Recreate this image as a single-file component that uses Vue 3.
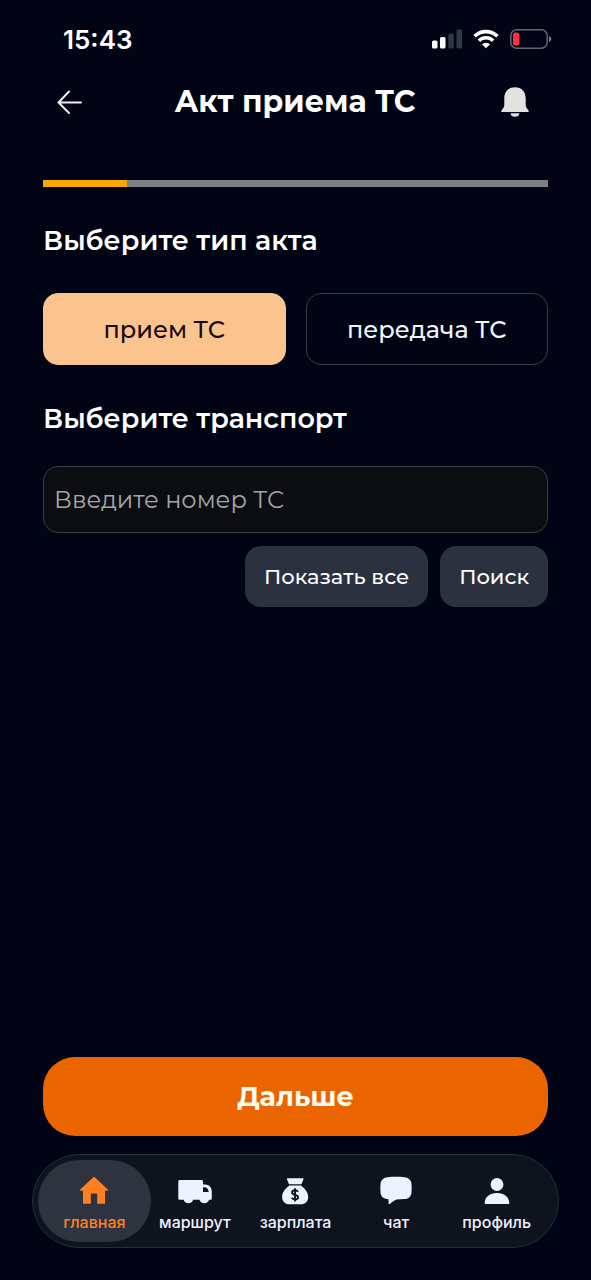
<script setup>
import { ref } from 'vue'

const actTypes = ['прием ТС', 'передача ТС']
const selectedType = ref(actTypes[0])
const vehicleNumber = ref('')
const activeTab = ref('home')
const tabs = [
  { id: 'home', label: 'главная' },
  { id: 'route', label: 'маршрут' },
  { id: 'salary', label: 'зарплата' },
  { id: 'chat', label: 'чат' },
  { id: 'profile', label: 'профиль' },
]
</script>

<template>
  <div class="screen">
    <div class="status">
      <span class="time">15:43</span>
      <div class="indicators">
        <svg width="30" height="20" viewBox="0 0 30 20" aria-hidden="true">
          <rect x="0" y="11.500" width="5.500" height="8" rx="1.600" fill="#fff" />
          <rect x="8" y="8" width="5.500" height="11.500" rx="1.600" fill="#fff" />
          <rect x="16.300" y="4.500" width="5.500" height="15" rx="1.600" fill="#333643" />
          <rect x="24.500" y="0.300" width="5.500" height="19.200" rx="1.600" fill="#333643" />
        </svg>
        <svg width="26" height="20" viewBox="0 0 26 20" aria-hidden="true">
          <g fill="none" stroke="#fff" stroke-width="3.600">
            <path d="M1.600 7.300a16.300 16.300 0 0 1 22.800 0" />
            <path d="M5.900 11.700a10.100 10.100 0 0 1 14.200 0" />
          </g>
          <path d="M13 19.300 8.900 15.300a5.900 5.900 0 0 1 8.200 0z" fill="#fff" />
        </svg>
        <svg width="42" height="20" viewBox="0 0 42 20" aria-hidden="true">
          <rect x="0.800" y="0.800" width="36.400" height="18.400" rx="5.800" fill="none" stroke="#656773" stroke-width="1.500" />
          <rect x="3" y="3.500" width="6.500" height="13" rx="2.500" fill="#ff343b" />
          <path d="M39 7v6c3-1 3-5 0-6z" fill="#777985" />
        </svg>
      </div>
    </div>

    <header class="header">
      <button class="back" type="button" aria-label="Назад">
        <svg width="26" height="24" viewBox="0 0 26 24" fill="none" stroke="#eee" stroke-width="2" stroke-linecap="round" stroke-linejoin="round">
          <path d="M24 12.500H1.500M12 1.500 1.500 12.500 12 23" />
        </svg>
      </button>
      <h1>Акт приема ТС</h1>
      <button class="bell" type="button" aria-label="Уведомления">
        <svg width="28" height="30" viewBox="0 0 28 30" fill="#e2e2e2">
          <path d="M14 .3C7.200.3 3.300 5.100 3.300 11.500v6.200c0 2-1 3.600-2.500 5.200-1.100 1.200-.7 2.100.6 2.100h25.200c1.300 0 1.700-.9.600-2.100-1.500-1.600-2.500-3.200-2.500-5.200v-6.200C24.700 5.100 20.800.3 14 .3z" />
          <path d="M9.700 26.300h8.600a4.300 3.500 0 0 1-8.600 0z" />
        </svg>
      </button>
    </header>

    <main class="content">
      <progress class="progress" value="1" max="6" aria-label="Шаг 1 из 6"></progress>

      <h2>Выберите тип акта</h2>
      <div class="types">
        <button
          v-for="type in actTypes"
          :key="type"
          type="button"
          class="type"
          :class="{ selected: type === selectedType }"
          :aria-pressed="type === selectedType"
          @click="selectedType = type"
        >{{ type }}</button>
      </div>

      <h2><label for="vehicle">Выберите транспорт</label></h2>
      <input id="vehicle" v-model="vehicleNumber" class="field" type="text" placeholder="Введите номер ТС" />
      <div class="actions">
        <button type="button">Показать все</button>
        <button type="button">Поиск</button>
      </div>

      <button class="next" type="button">Дальше</button>
    </main>

    <nav class="tabs">
      <a
        v-for="tab in tabs"
        :key="tab.id"
        :href="'#' + tab.id"
        class="tab"
        :class="{ active: tab.id === activeTab }"
        @click="activeTab = tab.id"
      >
        <svg v-if="tab.id === 'home'" width="36" height="30" viewBox="0 0 36 30" fill="currentColor">
          <path d="M17.300 1.200q.7-.5 1.400 0L31.800 13.400q.7 1.100-.6 1.300h-2.200v12.500q0 .6-.6.600h-7.200V17.500h-6.400v10.300H7.600q-.6 0-.6-.6V14.700H4.800q-1.300-.2-.6-1.300z" />
        </svg>
        <svg v-else-if="tab.id === 'route'" width="36" height="30" viewBox="0 0 36 30" fill="currentColor">
          <path fill-rule="evenodd" d="M2.800 4h21.700c.9 0 1.500.6 1.500 1.500V8.500h2.200c3.900 0 6.600 3 6.600 7.300v6.700c0 .9-.4 1.300-1.300 1.300h-1.400a5 4.700 0 0 1-9.600 0h-6.300a5 4.700 0 0 1-9.600 0H2.800c-1 0-1.500-.5-1.500-1.500V5.500C1.300 4.600 1.900 4 2.800 4zM26 11.300V16h5.700c-.3-2.700-1.800-4.700-4.200-4.700z" />
        </svg>
        <svg v-else-if="tab.id === 'salary'" width="36" height="30" viewBox="0 0 36 30">
          <path fill="currentColor" d="M10.700 2.300h15c.8 0 1.100.6.700 1.300l-2 4.600H12L10 3.600c-.4-.7-.1-1.300.7-1.300zM12.300 9.500h11.700c4 3.100 7.200 7.200 7.200 11.400 0 4.400-3.100 7.400-7.300 7.400H12.400c-4.200 0-7.300-3-7.300-7.400 0-4.200 3.200-8.300 7.200-11.400z" />
          <path fill="none" stroke="#0e131e" stroke-width="1.900" d="M18 12.200v13.200M21 15.800c-.7-1-1.700-1.500-3-1.500-1.700 0-2.900.8-2.900 2.200 0 3.100 6 1.500 6 4.700 0 1.400-1.300 2.200-3.100 2.200-1.400 0-2.500-.6-3.200-1.700" />
        </svg>
        <svg v-else-if="tab.id === 'chat'" width="36" height="30" viewBox="0 0 36 30" fill="currentColor">
          <path d="M9.500 1.200c5-.6 12-.6 17 0 4.500.5 6.800 3 7 7 .2 3 .2 5 0 8-.3 4.200-2.600 6.500-7 6.900-2.500.3-5.500.4-8 .5-2 .8-4.200 2.500-6 4-.9.700-2 .8-2-.4v-4C5.300 22.800 2.800 20.500 2.500 16.200c-.2-3-.2-5 0-8 .3-4 2.500-6.500 7-7z" />
        </svg>
        <svg v-else width="36" height="30" viewBox="0 0 36 30" fill="currentColor">
          <circle cx="18" cy="8.500" r="6.400" />
          <path d="M7 28c-1 0-1.400-.5-1.300-1.600.5-5.500 5-9.400 12.300-9.400s11.800 3.900 12.300 9.400c.1 1.100-.3 1.600-1.300 1.600z" />
        </svg>
        <span>{{ tab.label }}</span>
      </a>
    </nav>
  </div>
</template>

<style>
body {
  background: #000415;
}
</style>

<style scoped>
.screen {
  box-sizing: border-box;
  min-height: 100vh;
  display: flex;
  flex-direction: column;
  padding-bottom: 32px;
  background: #000415;
  color: #fff;
  font-family: Montserrat, Inter, "Noto Sans", sans-serif;
}

button,
input {
  font-family: inherit;
}

button {
  border: 0;
  cursor: pointer;
}

.status {
  display: flex;
  align-items: center;
  justify-content: space-between;
  height: 78px;
  padding: 0 39px 0 63px;
}

.time {
  font-family: Inter, sans-serif;
  font-size: 26px;
  font-weight: 600;
}

.indicators {
  display: flex;
  align-items: center;
  gap: 11px;
}

.header {
  display: flex;
  align-items: center;
  height: 48px;
  padding: 0 62px 0 51px;
}

.back,
.bell {
  display: grid;
  place-items: center;
  height: 46px;
  padding: 0;
  background: none;
}

.back {
  width: 38px;
}

.bell {
  width: 28px;
}

h1,
h2 {
  margin: 0;
}

h1 {
  flex: 1;
  font-size: 30px;
  line-height: 40px;
  font-weight: 700;
  text-align: center;
}

.content {
  flex: 1;
  display: flex;
  flex-direction: column;
  padding: 54px 43px 18px;
}

.progress {
  appearance: none;
  display: block;
  width: 100%;
  height: 7px;
  border: 0;
  background: #808083;
}

.progress::-webkit-progress-bar {
  background: #808083;
}

.progress::-webkit-progress-value {
  background: #f9a602;
}

h2 {
  margin-top: 36px;
  font-size: 27px;
  line-height: 36px;
  font-weight: 600;
}

.types {
  display: grid;
  grid-template-columns: 1fr 1fr;
  gap: 20px;
  margin-top: 34px;
}

.type {
  height: 72px;
  border: 1px solid #3a3c46;
  border-radius: 15px;
  background: transparent;
  color: #f2f6ff;
  font-size: 24px;
  font-weight: 500;
}

.type.selected {
  border-color: #fbc48f;
  background: #fbc48f;
  color: #15090a;
}

.field {
  box-sizing: border-box;
  width: 100%;
  height: 67px;
  margin-top: 29px;
  padding: 0 10px;
  border: 1px solid #3d3e42;
  border-radius: 15px;
  background: #0c0d11;
  color: #fff;
  font-size: 24px;
}

.field::placeholder {
  color: #a5a6a9;
  font-weight: 400;
  opacity: 1;
}

.actions {
  display: flex;
  justify-content: flex-end;
  gap: 12px;
  margin-top: 13px;
}

.actions button {
  height: 61px;
  padding: 0 19px;
  border-radius: 16px;
  background: #2c3140;
  color: #fff;
  font-size: 21px;
  font-weight: 500;
}

.next {
  height: 79px;
  margin-top: auto;
  border-radius: 32px;
  background: #ea6500;
  color: #fffaf0;
  font-size: 27px;
  font-weight: 700;
}

.tabs {
  display: grid;
  grid-template-columns: repeat(5, 1fr);
  margin: 0 32px;
  padding: 5px 11px;
  border: 1px solid #272c3d;
  border-radius: 47px;
  background: #0e131e;
}

.tab {
  display: flex;
  flex-direction: column;
  align-items: center;
  gap: 6px;
  height: 66px;
  margin: 0 -6px;
  padding-top: 16px;
  border-radius: 41px;
  color: #eef1ff;
  font-family: Inter, sans-serif;
  font-size: 16px;
  line-height: 20px;
  font-weight: 500;
  text-decoration: none;
}

.tab.active {
  background: #2e333f;
  color: #ff8124;
}
</style>
